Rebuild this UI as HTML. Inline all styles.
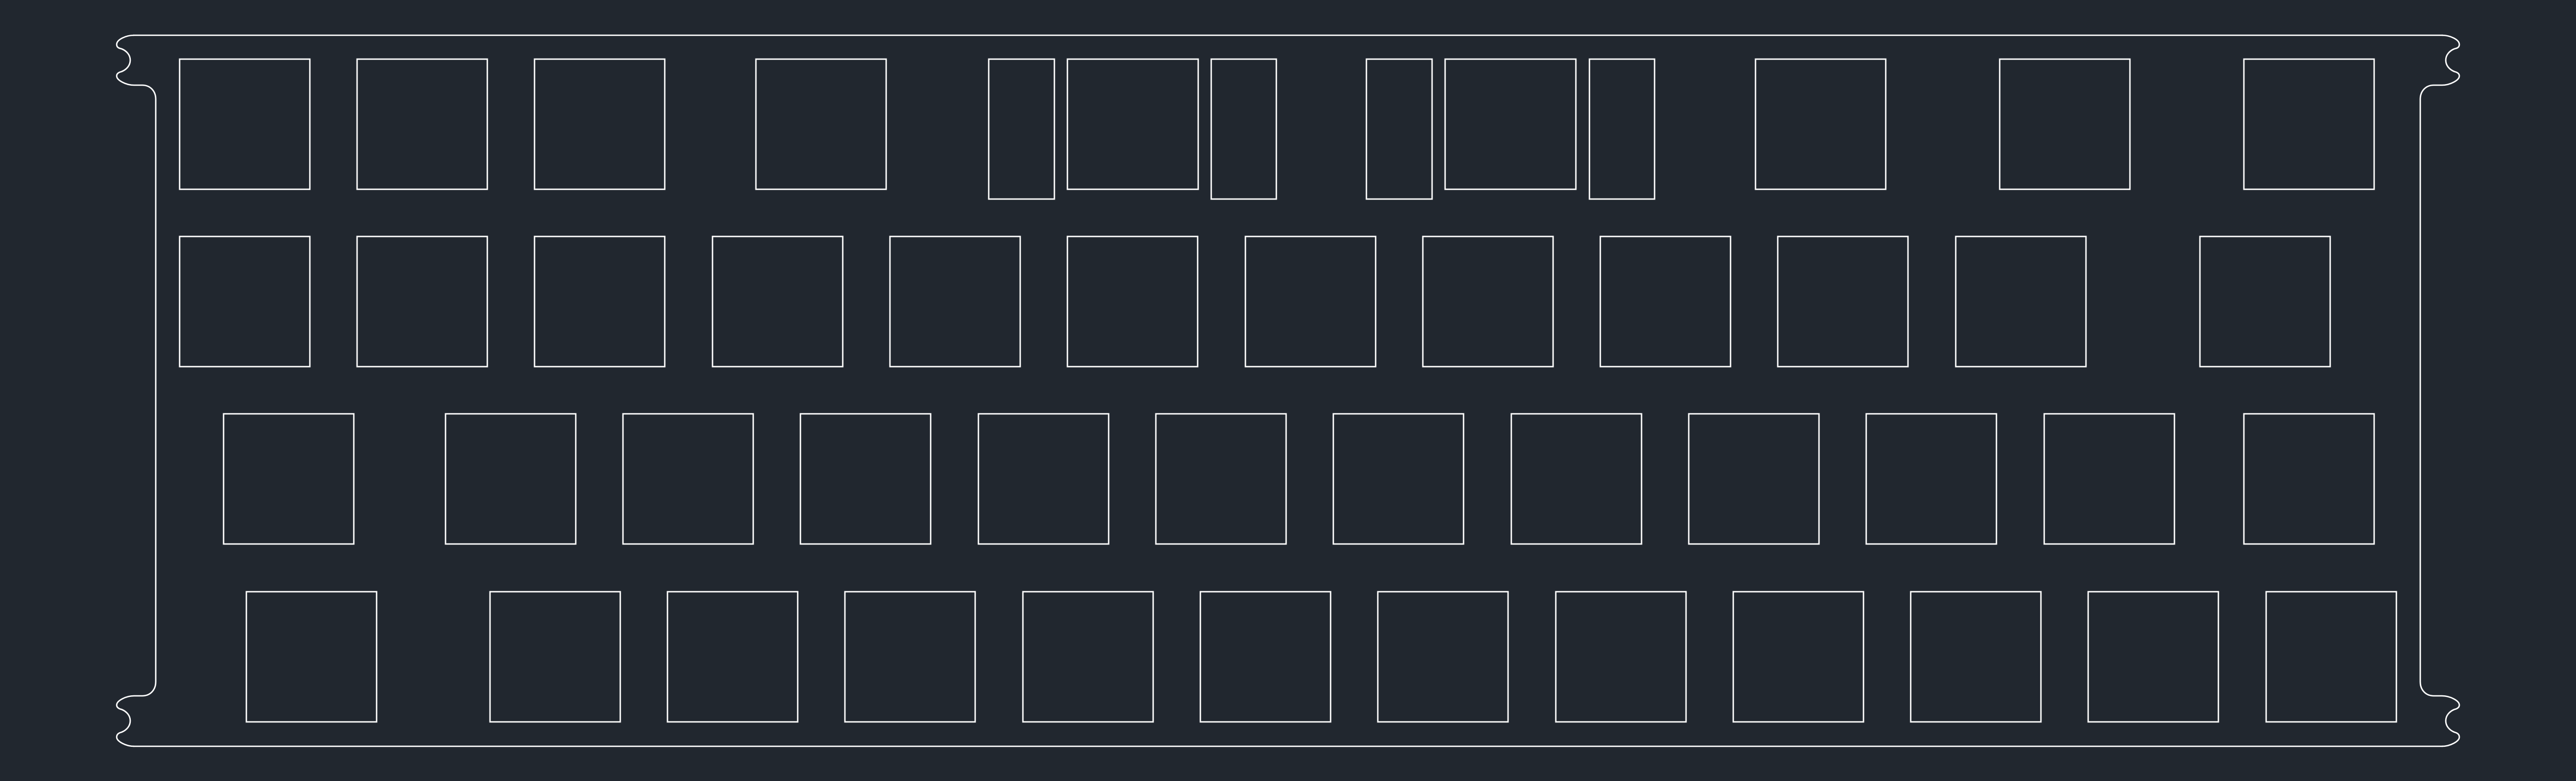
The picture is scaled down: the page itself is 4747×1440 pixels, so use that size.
<!DOCTYPE html>
<html><head><meta charset="utf-8"><style>
html,body{margin:0;padding:0;background:#21272f;width:4747px;height:1440px;overflow:hidden}
svg{display:block}
</style></head><body>
<svg width="4747" height="1440" viewBox="0 0 4747 1440" xmlns="http://www.w3.org/2000/svg">
<rect width="4747" height="1440" fill="#21272f"/>
<g fill="none" stroke="#ffffff" stroke-width="2.6">
<line x1="246" y1="65" x2="4501" y2="65"/>
<line x1="246" y1="1376" x2="4501" y2="1376"/>
<g id="side">
<path d="M247 65 C232 65 215 73 215 82 C215 88 220 89 224 90 C234 94 240 102 240 111 C240 120 234 128 224 132 C220 133 215 135 215 140 C215 148 232 157 247 157 L262 157 C277 157 287 168 287 183 L287 1257 C287 1272 277 1283 262 1283 L247 1283 C232 1283 215 1292 215 1300 C215 1305 220 1307 224 1308 C234 1312 240 1320 240 1329 C240 1338 234 1346 224 1350 C220 1351 215 1353 215 1359 C215 1367 232 1376 247 1376"/>
</g>
<use href="#side" transform="translate(4747,0) scale(-1,1)"/>
<!-- row 1 -->
<rect x="331" y="109" width="240" height="240"/>
<rect x="658" y="109" width="240" height="240"/>
<rect x="985" y="109" width="240" height="240"/>
<rect x="1393" y="109" width="240" height="240"/>
<rect x="1822" y="109" width="121" height="258"/>
<rect x="1967" y="109" width="241" height="240"/>
<rect x="2232" y="109" width="120" height="258"/>
<rect x="2518" y="109" width="121" height="258"/>
<rect x="2663" y="109" width="241" height="240"/>
<rect x="2929" y="109" width="120" height="258"/>
<rect x="3235" y="109" width="240" height="240"/>
<rect x="3685" y="109" width="240" height="240"/>
<rect x="4135" y="109" width="240" height="240"/>
<!-- row 2 -->
<rect x="331" y="436" width="240" height="240"/>
<rect x="658" y="436" width="240" height="240"/>
<rect x="985" y="436" width="240" height="240"/>
<rect x="1313" y="436" width="240" height="240"/>
<rect x="1640" y="436" width="240" height="240"/>
<rect x="1967" y="436" width="240" height="240"/>
<rect x="2295" y="436" width="240" height="240"/>
<rect x="2622" y="436" width="240" height="240"/>
<rect x="2949" y="436" width="240" height="240"/>
<rect x="3276" y="436" width="240" height="240"/>
<rect x="3604" y="436" width="240" height="240"/>
<rect x="4054" y="436" width="240" height="240"/>
<!-- row 3 -->
<rect x="412" y="763" width="240" height="240"/>
<rect x="821" y="763" width="240" height="240"/>
<rect x="1148" y="763" width="240" height="240"/>
<rect x="1475" y="763" width="240" height="240"/>
<rect x="1803" y="763" width="240" height="240"/>
<rect x="2130" y="763" width="240" height="240"/>
<rect x="2457" y="763" width="240" height="240"/>
<rect x="2785" y="763" width="240" height="240"/>
<rect x="3112" y="763" width="240" height="240"/>
<rect x="3439" y="763" width="240" height="240"/>
<rect x="3767" y="763" width="240" height="240"/>
<rect x="4135" y="763" width="240" height="240"/>
<!-- row 4 -->
<rect x="454" y="1091" width="240" height="240"/>
<rect x="903" y="1091" width="240" height="240"/>
<rect x="1230" y="1091" width="240" height="240"/>
<rect x="1557" y="1091" width="240" height="240"/>
<rect x="1885" y="1091" width="240" height="240"/>
<rect x="2212" y="1091" width="240" height="240"/>
<rect x="2539" y="1091" width="240" height="240"/>
<rect x="2867" y="1091" width="240" height="240"/>
<rect x="3194" y="1091" width="240" height="240"/>
<rect x="3521" y="1091" width="240" height="240"/>
<rect x="3848" y="1091" width="240" height="240"/>
<rect x="4176" y="1091" width="240" height="240"/>
</g>
</svg>
</body></html>
